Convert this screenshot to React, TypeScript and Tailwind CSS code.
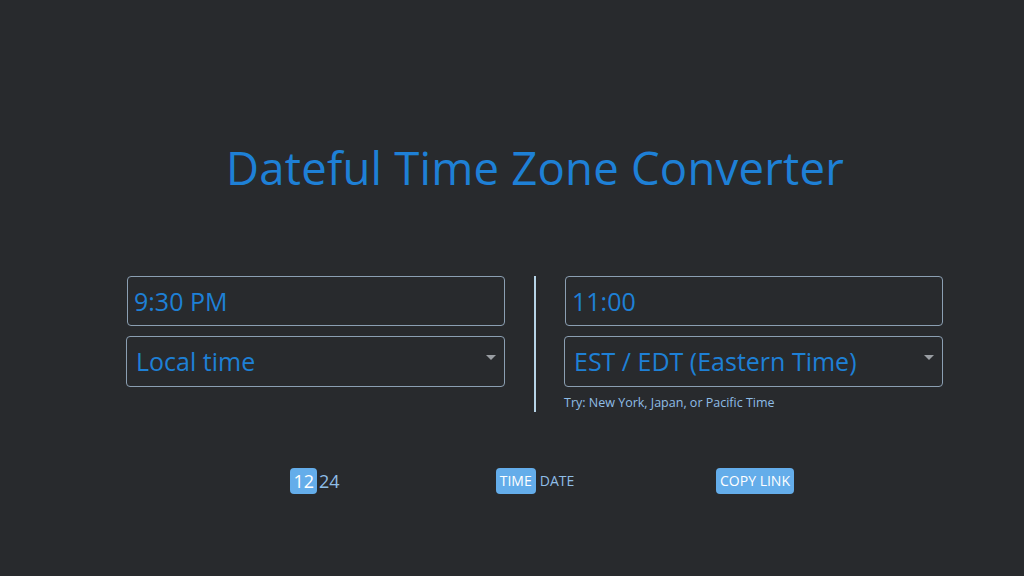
import React from "react";

const font = { fontFamily: '"Open Sans", "Noto Sans", sans-serif' };

const Caret = () => (
  <svg width="10" height="6" viewBox="0 0 10 6" className="absolute right-[8px] top-[18px]">
    <path d="M0 0 L10 0 L5 5 Z" fill="#9a9ea3" />
  </svg>
);

const Column = (props: { time: string; zone: string; hint?: string }) => {
  return (
    <div className="w-[380px] flex flex-col">
      <div className="h-[50px] w-[378px] ml-[1px] border border-[#8b9fb2] rounded-[4px] flex items-center px-[6px]">
        <span className="text-[25px] text-[#1e80d6] leading-none">{props.time}</span>
      </div>
      <div className="relative mt-[10px] h-[51px] w-[379px] border border-[#8b9fb2] rounded-[4px] flex items-center px-[9px]">
        <span className="text-[25px] text-[#1e80d6] leading-none">{props.zone}</span>
        <Caret />
      </div>
      {props.hint && (
        <div className="mt-[8px] text-[12.5px] text-[#8fbde6] leading-[16px]">{props.hint}</div>
      )}
    </div>
  );
};

const App = () => {
  return (
    <div className="w-[1024px] h-[576px] bg-[#282a2d] flex flex-col items-center pl-[46px]" style={font}>
      <h1 className="mt-[137px] text-[45.5px] leading-[60px] text-[#1e80d6] tracking-[0.2px]">
        Dateful Time Zone Converter
      </h1>
      <div className="mt-[79px] flex gap-[28px]">
        <Column time="9:30 PM" zone="Local time" />
        <div className="w-[2px] h-[136px] bg-[#b6d3e6]" />
        <Column time="11:00" zone="EST / EDT (Eastern Time)" hint="Try: New York, Japan, or Pacific Time" />
      </div>
      <div className="mt-[56px] w-[660px] grid grid-cols-3">
        <div className="flex items-center justify-center">
          <span className="h-[26px] px-[3px] rounded-[4px] bg-[#64adea] text-white text-[18px] leading-[26px]">12</span>
          <span className="ml-[2px] text-[#8fbde6] text-[18px] leading-[26px]">24</span>
        </div>
        <div className="flex items-center justify-center">
          <span className="h-[26px] px-[4px] rounded-[4px] bg-[#64adea] text-white text-[14px] leading-[26px]">TIME</span>
          <span className="ml-[4px] text-[#8fbde6] text-[14px] leading-[26px]">DATE</span>
        </div>
        <div className="flex items-center justify-center">
          <span className="h-[26px] px-[4px] rounded-[4px] bg-[#64adea] text-white text-[14px] leading-[26px]">COPY LINK</span>
        </div>
      </div>
    </div>
  );
};

export default App;
